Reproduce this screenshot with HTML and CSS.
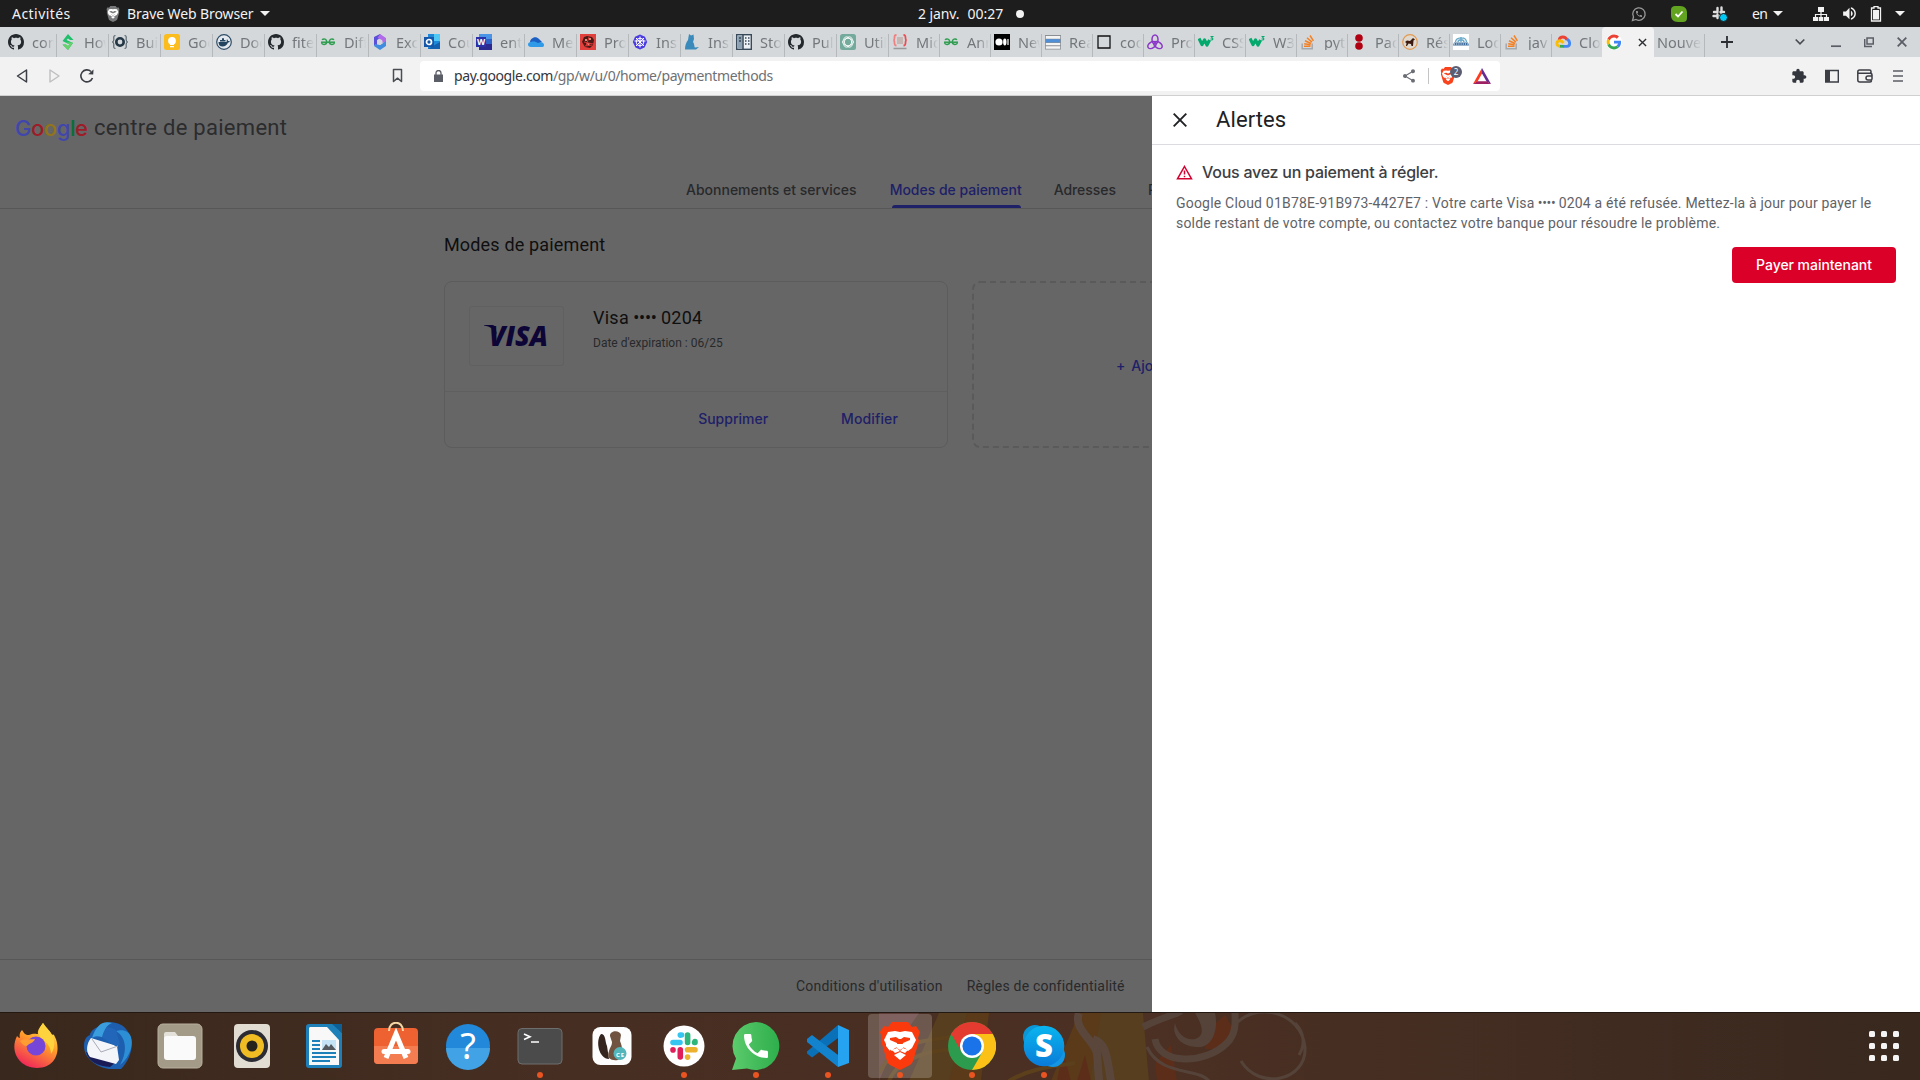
FILE: index.html
```
<!DOCTYPE html>
<html lang="fr">
<head>
<meta charset="utf-8">
<title>Modes de paiement</title>
<link rel="stylesheet" href="styles.css">
</head>
<body>
<svg class="defs" aria-hidden="true">
  <symbol id="github" viewBox="0 0 16 16"><path fill="#24292e" d="M8 0C3.58 0 0 3.58 0 8c0 3.54 2.29 6.53 5.47 7.59.4.07.55-.17.55-.38 0-.19-.01-.82-.01-1.49-2.01.37-2.53-.49-2.69-.94-.09-.23-.48-.94-.82-1.13-.28-.15-.68-.52-.01-.53.63-.01 1.08.58 1.23.82.72 1.21 1.87.87 2.33.66.07-.52.28-.87.51-1.07-1.78-.2-3.64-.89-3.64-3.95 0-.87.31-1.59.82-2.15-.08-.2-.36-1.02.08-2.12 0 0 .67-.21 2.2.82.64-.18 1.32-.27 2-.27.68 0 1.36.09 2 .27 1.53-1.04 2.2-.82 2.2-.82.44 1.1.16 1.92.08 2.12.51.56.82 1.27.82 2.15 0 3.07-1.87 3.75-3.65 3.95.29.25.54.73.54 1.48 0 1.07-.01 1.93-.01 2.2 0 .21.15.46.55.38A8.013 8.013 0 0016 8c0-4.42-3.58-8-8-8z"/></symbol>
  <symbol id="geeks" viewBox="0 0 16 16"><g fill="none" stroke="#2f9d50" stroke-width="1.500"><path d="M2 5.800c1.800-1.600 4.700-.8 4.700 2 0 3.400-4.600 3.400-5.200.8M14 5.800c-1.800-1.600-4.700-.8-4.700 2 0 3.400 4.600 3.400 5.200.8"/><path d="M1 8.200h14"/></g></symbol>
  <symbol id="w3" viewBox="0 0 16 16"><path fill="none" stroke="#04aa6d" stroke-width="3.200" stroke-linejoin="round" d="M1 4.500 4 10.500 6.500 6 9 11l2.600-5"/><path fill="none" stroke="#04aa6d" stroke-width="1.100" d="M12.500 2.500h2.300l-1.300 1.500c2 0 1.800 2.500-.9 1.900"/></symbol>
  <symbol id="stack" viewBox="0 0 16 16"><path fill="none" stroke="#a5a9ad" stroke-width="1.500" d="M2.200 9.500v5.300h10V9.500"/><path fill="none" stroke="#f48024" stroke-width="1.500" d="M4 12.300h6.500M4.200 9.700l6.400 1M5 6.700l6 2.800M7 3.800l4.900 4.300M10 1.500l3.400 5.300"/></symbol>
  <symbol id="lion" viewBox="0 0 40 48"><path d="M12 0h16l4 5 4-1 4 6-2 6 1 3-6 20c-1 3-3 4-5 5l-8 4-8-4c-2-1-4-2-5-5L1 19l1-3-2-6 4-6 4 1z" fill="currentColor"/><path fill="var(--face, #fff)" d="m20 10 5-1 7 1 4 8-4 8-4 3-3-3-3-1 1-4 7-3v-2l-6-1-3 2h-2l-3-2-6 1v2l7 3 1 4-3 1-3 3-4-3-4-8 4-8 7-1zM17 22h6v4l-3 2-3-2zM20 30l6 3-6 5-6-5z"/><path fill="var(--face, #fff)" d="m12 28 5-2 3 3 3-3 5 2-3 3-5-2-5 2zM6 20l5 5-1 4-4-5z"/></symbol>
  <symbol id="slack" viewBox="0 0 28 28"><g stroke-width="5.600" stroke-linecap="round" fill="none"><path stroke="#36c5f0" d="M3 10.500h7M10.300 3v.1M10.300 3h1.200"/><path stroke="#2eb67d" d="M17.600 3v7.500M25 9.500v1M25 10.500h-.5"/><path stroke="#ecb22e" d="M17.600 17.800H25M17.600 25v.1"/><path stroke="#e01e5a" d="M10.300 17.800V25M3 17.800v.1"/></g></symbol>
  <symbol id="phone" viewBox="0 0 24 24"><path fill="currentColor" d="M6.620 10.790c1.440 2.830 3.760 5.140 6.590 6.590l2.200-2.200c.27-.27.67-.36 1.020-.24 1.120.37 2.330.57 3.570.57.55 0 1 .45 1 1V20c0 .55-.45 1-1 1-9.390 0-17-7.610-17-17 0-.55.45-1 1-1h3.500c.55 0 1 .45 1 1 0 1.250.2 2.450.57 3.570.11.35.03.74-.25 1.020z"/></symbol>
</svg>

<header class="topbar">
  <span class="activities">Activités</span>
  <span class="appmenu"><svg class="lion" viewBox="0 0 40 48"><use href="#lion"/></svg><span>Brave Web Browser</span><i class="caret"></i></span>
  <span class="clock"><span>2 janv.</span><span>00:27</span><i class="dot"></i></span>
  <div class="tray">
    <svg width="16" height="16" viewBox="0 0 16 16" color="#999"><path fill="none" stroke="#999" stroke-width="1.300" d="m1.500 14.500 1-3.500a6.200 6.200 0 1 1 2.500 2.500z"/><use href="#phone" x="4" y="4" width="8" height="8"/></svg>
    <svg width="16" height="16" viewBox="0 0 16 16"><path fill="#62a420" d="M4 0h5c5 0 7 3 7 7v5c0 3-2 4-4 4H7c-5 0-7-3-7-7V4c0-3 2-4 4-4z"/><path fill="none" stroke="#fff" stroke-width="1.800" d="m4.500 8 2.500 2.500L11.500 5.500"/></svg>
    <svg width="16" height="16" viewBox="0 0 16 16"><path stroke="#ddd" stroke-width="2.400" stroke-linecap="round" stroke-dasharray="3.500 3" d="M5.500 2v12M9.500 1.500v8M2 6h12M1.500 10h10"/><circle cx="11.500" cy="11.500" r="4" fill="#00c8f5" stroke="#1d1d1d"/></svg>
    <span class="lang">en<i class="caret"></i></span>
    <svg width="16" height="16" viewBox="0 0 16 16"><path fill="#f2f2f2" d="M5 1h6v5H5zM0 11h5v4H0zm5.700 0h4.600v4H5.700zM11 11h5v4h-5z"/><path fill="none" stroke="#f2f2f2" stroke-width="1.200" d="M8 5v6M2.500 12V8.500h11V12"/></svg>
    <svg width="17" height="17" viewBox="0 0 24 24"><path fill="#f2f2f2" d="M3 9v6h4l5 5V4L7 9H3zm13.500 3c0-1.770-1.020-3.290-2.500-4.030v8.050c1.480-.73 2.500-2.250 2.500-4.020zM14 3.230v2.060c2.890.86 5 3.540 5 6.710s-2.110 5.850-5 6.710v2.060c4.010-.91 7-4.490 7-8.770s-2.990-7.860-7-8.770z"/></svg>
    <svg width="12" height="16" viewBox="0 0 12 16"><path fill="none" stroke="#f2f2f2" stroke-width="1.300" d="M4 2V.7h4V2h2.500v13h-9V2z"/><path fill="#f2f2f2" d="M3 4h6v9.500H3z"/></svg>
    <i class="caret"></i>
  </div>
</header>

<nav class="tabs">
  <div class="tab"><svg><use href="#github"/></svg><span>com</span></div>
  <div class="tab"><svg viewBox="0 0 16 16"><path fill="#1fbf6b" d="m8 0 5.500 6H10L8 4.500 6.500 6 13 9 8 16 2.500 10.500H6l2 1.500 1.500-1.500L2.500 7z"/><path fill="#6ad26c" d="M13 8.500 8 16l-5.500-5.500H6l2 1.500 1.700-1.500L6 8.600z"/></svg><span>How</span></div>
  <div class="tab"><svg viewBox="0 0 16 16"><circle cx="8" cy="8" r="3.700" fill="none" stroke="#233744" stroke-width="2.600"/><path fill="none" stroke="#5c6a72" stroke-width="1.200" d="M3.500 1.500C1 1.500 2 4 1.800 6 1.600 7.500.5 8 .5 8s1.100.5 1.300 2c.2 2-.8 4.500 1.700 4.500M12.500 1.500C15 1.500 14 4 14.200 6c.2 1.500 1.300 2 1.300 2s-1.100.5-1.300 2c-.2 2 .8 4.500-1.700 4.500"/></svg><span>Buil</span></div>
  <div class="tab"><svg viewBox="0 0 16 16"><rect width="16" height="16" rx="2.500" fill="#fbbc1e"/><circle cx="8" cy="6.800" r="3.900" fill="#fff"/><path fill="#fff" d="M6 9h4v2H6zM6 12h4v1.300H6z"/></svg><span>Goo</span></div>
  <div class="tab"><svg viewBox="0 0 16 16"><circle cx="8" cy="8" r="7.300" fill="#e3e9ee" stroke="#2f4d66" stroke-width="1.200"/><path fill="#24455f" d="M2.500 8h8c.5-1.500 0-2 .5-2.800.8.500 1 1.300 1 1.800h1.800c-.3 1-1 1.500-1.800 1.600C11 11.500 9 12.500 6.500 12.500 4 12.500 2.500 11 2.500 8zM4 6h5.500v1.500H4zM6 4.300h2V6H6z"/></svg><span>Doc</span></div>
  <div class="tab"><svg><use href="#github"/></svg><span>fitec</span></div>
  <div class="tab"><svg><use href="#geeks"/></svg><span>Diff</span></div>
  <div class="tab"><svg viewBox="0 0 16 16"><path fill="#5a4fd8" d="M8 0 2 3v8l3 2V6l5-3z"/><path fill="#b16be8" d="m8 0 6 4v4l-4 1V6L5.500 4z"/><path fill="#3f8be0" d="M14 7v5l-6 4-6-4 1-2 5 1 3-2z"/><path fill="#d4d8db" d="m8 5.500 2.500 1.200v2.800L8 11l-2.500-1.500V6.700z"/></svg><span>Exce</span></div>
  <div class="tab"><svg viewBox="0 0 16 16"><path fill="#1e88d8" d="M4 0h12v15H4z"/><path fill="#50c8f5" d="M10 0h6v7h-6z"/><path fill="#1360b0" d="M4 15 16 8v7z"/><rect y="3" width="10" height="10" fill="#1656a8"/><circle cx="5" cy="8" r="2.500" fill="none" stroke="#fff" stroke-width="1.700"/></svg><span>Cou</span></div>
  <div class="tab"><svg viewBox="0 0 16 16"><path fill="#4a94e8" d="M3 0h13v5H3z"/><path fill="#2f62c8" d="M3 5h13v5H3z"/><path fill="#2c2a90" d="M3 10h13v6H3z"/><rect y="3" width="10" height="10" fill="#2b2fa8"/><text x="1" y="11" font-size="8.500" font-weight="700" fill="#fff">W</text></svg><span>entr</span></div>
  <div class="tab"><svg viewBox="0 0 16 16"><path fill="#1b5fc4" d="M2 8c0-3 5-7 9-3l3 3-8 4z"/><path fill="#2f9be8" d="M3 13c-4 0-4-5 0-5 3-1 5 0 7 1 4-2 6 0 6 2s-1 2-3 2z"/></svg><span>Mes</span></div>
  <div class="tab"><svg viewBox="0 0 16 16"><path fill="#e2403c" d="M0 0h16v16H0z"/><path fill="#4a1a16" d="M4 3l3-1 5 1 2 3-1 5-3 3-5-1-3-5z"/><path fill="#e08a78" d="M5 5h2v2H5zM9 4h2v2H9zM6 9h4l-1 3z"/><path stroke="#d33" d="m4 8 9 2M9 3l-3 9M5 12l7-1"/></svg><span>Pro</span></div>
  <div class="tab"><svg viewBox="0 0 16 16"><path fill="#4a3be0" d="m8 .5 5 2.200L15.200 8 12.500 13.500 8 15.500 3.500 13.500.8 8 3 2.700z"/><circle cx="8" cy="8" r="3.800" fill="none" stroke="#fff"/><path stroke="#fff" d="M8 2.500v11M2.500 7h11M4 12l8-8M4 4l8 8"/></svg><span>Inst</span></div>
  <div class="tab"><svg viewBox="0 0 16 16"><path fill="#3a8bbb" d="M5 0l2 1.500L9.500.5 10 5 9 8c2 3 1 5 2 5.500l4-.5-3 2.500H1C1 11 2 9 4 6z"/></svg><span>Inst</span></div>
  <div class="tab"><svg viewBox="0 0 16 16"><rect x=".7" y=".7" width="14.600" height="14.600" fill="#eef2f5" stroke="#38495a" stroke-width="1.400"/><path fill="#8da3b3" d="M1.500 1.500h5v13h-5z"/><path stroke="#38495a" stroke-width="1.500" d="M7 1v14M3 4h2M3 7h2M9 4h1.500M12 4h1.500M9 7h1.500M12 7h1.500M9 10h1.500M12 10h1.500"/></svg><span>Stoc</span></div>
  <div class="tab"><svg><use href="#github"/></svg><span>Pull</span></div>
  <div class="tab"><svg viewBox="0 0 16 16"><rect width="16" height="16" rx="2.500" fill="#74aa9c"/><g fill="none" stroke="#fff" stroke-width=".8"><ellipse cx="8" cy="8" rx="5.600" ry="3.600"/><ellipse cx="8" cy="8" rx="5.600" ry="3.600" transform="rotate(60 8 8)"/><ellipse cx="8" cy="8" rx="5.600" ry="3.600" transform="rotate(120 8 8)"/></g></svg><span>Utili</span></div>
  <div class="tab narrow"><svg viewBox="0 0 16 16"><path fill="none" stroke="#f08080" stroke-width="1.800" d="M4.500 1c-2 0-2 1-2 3S1.500 6.200 1.500 6.200s1 .3 1 2.300 0 3 2 3"/><path fill="none" stroke="#ee4a50" stroke-width="1.800" d="M11.500 1c2 0 2 1 2 3s1 2.200 1 2.200-1 .3-1 2.300 0 3-2 3"/><path fill="#c5b8b4" d="M5 3h6v7H5z"/><path stroke="#999" stroke-width="1.500" d="M1.500 14.500h13"/></svg><span>Mig</span></div>
  <div class="tab narrow"><svg><use href="#geeks"/></svg><span>Ann</span></div>
  <div class="tab narrow"><svg viewBox="0 0 16 16"><path d="M0 0h16v16H0z"/><circle cx="5" cy="8" r="3.600" fill="#fff"/><ellipse cx="10.800" cy="8" rx="1.700" ry="3.400" fill="#fff"/><path stroke="#fff" stroke-width="1.200" d="M14 5v6"/></svg><span>New</span></div>
  <div class="tab narrow"><svg viewBox="0 0 16 16"><path fill="#8a8f94" d="M0 1h16v14.500H0z"/><path fill="#f4f4f4" d="M.8 2h14.400v2.700H.8zM.8 9h14.400v2.300H.8zM.8 12.300h14.400v2.400H.8z"/><path fill="#4f8fd8" d="M.8 5.200h14.400v3.200H.8z"/></svg><span>Rea</span></div>
  <div class="tab narrow"><svg viewBox="0 0 16 16"><path fill="none" stroke="#111" stroke-width="1.300" d="M2 2h12v12H2z"/></svg><span>cod</span></div>
  <div class="tab narrow"><svg viewBox="0 0 16 16"><g fill="none" stroke="#8b36c8" stroke-width="1.500"><ellipse cx="8" cy="5.500" rx="3" ry="4.600"/><ellipse cx="5" cy="11" rx="3" ry="4.600" transform="rotate(55 5 11)"/><ellipse cx="11" cy="11" rx="3" ry="4.600" transform="rotate(-55 11 11)"/></g></svg><span>Pro</span></div>
  <div class="tab narrow"><svg><use href="#w3"/></svg><span>CSS</span></div>
  <div class="tab narrow"><svg><use href="#w3"/></svg><span>W3S</span></div>
  <div class="tab narrow"><svg><use href="#stack"/></svg><span>pyth</span></div>
  <div class="tab narrow"><svg viewBox="0 0 16 16"><circle cx="8" cy="4" r="3.800" fill="#b00012"/><circle cx="8" cy="12" r="3.800" fill="#b00012"/></svg><span>Pag</span></div>
  <div class="tab narrow"><svg viewBox="0 0 16 16"><circle cx="8" cy="8" r="7.300" fill="#dfd9d0" stroke="#e39a50" stroke-width="1.200"/><path fill="#3d1a0d" d="m3 8 2-1.500 3 .5 3-3 2 1.500-1.500 1L11 12H9.500l-.5-2-2.500-.5L5 12H4l.5-3z"/></svg><span>Rés</span></div>
  <div class="tab narrow"><svg viewBox="0 0 16 16"><path fill="#fff" d="M0 0h16v16H0z"/><path fill="none" stroke="#69a9c9" stroke-width="1.400" d="M2.500 8C3 3 13 2 13.500 8M5 8c0-3 6-3 6 0M8 3v5"/><path fill="#3c6c9c" d="M1 8.500h14l1 3H0z"/><path stroke="#fff" stroke-dasharray="1 1.200" d="M1 10h14"/></svg><span>Log</span></div>
  <div class="tab narrow"><svg><use href="#stack"/></svg><span>jav</span></div>
  <div class="tab narrow"><svg viewBox="0 0 16 16"><g fill="none" stroke-width="2.800"><path stroke="#ea4335" d="M4 6c1-4 6.500-4 8 0"/><path stroke="#4285f4" d="M12 5c4 2.500 3 7.300 0 7.300H8"/><path stroke="#34a853" d="M8.500 12.300H4.500"/><path stroke="#fbbc05" d="M5 12.300c-4 0-4-5-1-5.500 2-.3 3.500.700 4.500 2"/></g></svg><span>Clou</span></div>
  <div class="tab active"><svg viewBox="-2 -2 52 52"><circle cx="24" cy="24" r="26" fill="#fff"/><path fill="#ea4335" d="M24 9.500c3.540 0 6.710 1.220 9.210 3.600l6.850-6.850C35.900 2.380 30.470 0 24 0 14.620 0 6.510 5.380 2.560 13.220l7.980 6.190C12.430 13.720 17.740 9.500 24 9.500z"/><path fill="#4285f4" d="M46.980 24.550c0-1.570-.15-3.090-.38-4.550H24v9.020h12.940c-.58 2.960-2.260 5.480-4.780 7.180l7.730 6c4.510-4.180 7.090-10.360 7.090-17.650z"/><path fill="#fbbc05" d="M10.530 28.590c-.48-1.450-.76-2.990-.76-4.590s.27-3.140.76-4.590l-7.980-6.190C.92 16.460 0 20.120 0 24c0 3.880.92 7.540 2.560 10.780z"/><path fill="#34a853" d="M24 48c6.480 0 11.930-2.130 15.890-5.810l-7.730-6c-2.150 1.450-4.920 2.300-8.160 2.300-6.260 0-11.570-4.220-13.470-9.910l-7.980 6.190C6.510 42.620 14.620 48 24 48z"/></svg><svg class="close" viewBox="0 0 10 10"><path stroke="#2b2e33" stroke-width="1.500" d="m1 1 8 8M9 1 1 9"/></svg></div>
  <div class="tab newtab"><span>Nouvel</span></div>
  <svg class="plus" viewBox="0 0 12 12"><path stroke="#2b2e33" stroke-width="1.800" d="M6 0v12M0 6h12"/></svg>
  <div class="winctl">
    <svg width="10" height="16" viewBox="0 0 10 16"><path fill="none" stroke="#4a4d52" stroke-width="1.700" d="m.7 5.500 4.300 4.300 4.300-4.300"/></svg>
    <svg width="10" height="16" viewBox="0 0 10 16"><path stroke="#5b5e66" stroke-width="1.700" d="M0 12.200h10"/></svg>
    <svg width="10" height="16" viewBox="0 0 10 16"><path fill="none" stroke="#5b5e66" stroke-width="1.500" d="M3 4h6.300v6H3zM.7 5v7.500H8"/></svg>
    <svg width="10" height="16" viewBox="0 0 10 16"><path stroke="#5b5e66" stroke-width="1.800" d="m.7 3.700 8.600 8.600m0-8.600-8.600 8.600"/></svg>
  </div>
</nav>

<div class="toolbar">
  <div class="navbtns">
    <svg width="16" height="16" viewBox="0 0 16 16"><path fill="none" stroke="#3b3e45" stroke-width="1.500" stroke-linejoin="round" d="M11.500 2v12L2.500 8z"/></svg>
    <svg width="16" height="16" viewBox="0 0 16 16"><path fill="none" stroke="#bfbfc2" stroke-width="1.400" stroke-linejoin="round" d="M2 2v12l9-6z"/></svg>
    <svg width="16" height="16" viewBox="0 0 16 16"><path fill="none" stroke="#3b3e45" stroke-width="1.600" d="M13.500 10A6 6 0 1 1 12 3.500"/><path fill="#3b3e45" d="m14.500 1.500-.3 5-5-.3z"/></svg>
  </div>
  <svg class="bookmark" viewBox="0 0 12 16"><path fill="none" stroke="#4a4d52" stroke-width="1.500" stroke-linejoin="round" d="M1.500 1.500h8v12l-4-3.300-4 3.300z"/></svg>
  <div class="url">
    <svg width="9" height="12" viewBox="0 0 9 12"><path fill="#5b5e66" d="M0 4.500h9V12H0z"/><path fill="none" stroke="#5b5e66" stroke-width="1.300" d="M2 5V3a2.500 2.500 0 0 1 5 0v2"/></svg>
    <span class="address"><b>pay.google.com</b>/gp/w/u/0/home/paymentmethods</span>
    <svg class="share" width="16" height="16" viewBox="0 0 24 24"><path fill="#6b6e75" d="M18 16.080c-.76 0-1.440.3-1.960.77L8.910 12.700c.05-.23.09-.46.09-.7s-.04-.47-.09-.7l7.050-4.110c.54.5 1.250.81 2.040.81 1.660 0 3-1.340 3-3s-1.340-3-3-3-3 1.340-3 3c0 .24.04.47.09.7L8.040 9.810C7.500 9.310 6.790 9 6 9c-1.660 0-3 1.340-3 3s1.340 3 3 3c.79 0 1.500-.31 2.040-.81l7.120 4.160c-.05.21-.08.43-.08.65 0 1.610 1.310 2.920 2.920 2.920s2.920-1.310 2.920-2.920-1.310-2.920-2.920-2.920z"/></svg>
    <i class="sep"></i>
    <span class="shield"><svg viewBox="0 0 40 48"><use href="#lion"/></svg><em>2</em></span>
    <svg class="bat" width="18" height="16" viewBox="0 0 18 16"><path fill="#ff3b1d" d="M9 0 0 16l4.500-2.500L9 5.500z"/><path fill="#662d91" d="m9 0 9 16-4.500-2.500L9 5.500z"/><path fill="#9e1f63" d="m0 16 4.500-2.700h9L18 16z"/></svg>
  </div>
  <div class="ext">
    <svg width="16" height="16" viewBox="0 0 24 24"><path fill="#33363c" d="M20.500 11H19V7c0-1.100-.9-2-2-2h-4V3.500C13 2.120 11.880 1 10.500 1S8 2.120 8 3.500V5H4c-1.100 0-1.990.9-1.990 2v3.800H3.500c1.490 0 2.700 1.210 2.700 2.700s-1.210 2.700-2.700 2.700H2V20c0 1.100.9 2 2 2h3.800v-1.500c0-1.490 1.210-2.700 2.700-2.700 1.490 0 2.700 1.210 2.700 2.700V22H17c1.100 0 2-.9 2-2v-4h1.500c1.380 0 2.500-1.120 2.500-2.500S21.880 11 20.500 11z"/></svg>
    <svg width="16" height="16" viewBox="0 0 16 16"><path fill="none" stroke="#3b3e45" stroke-width="1.400" d="M1.700 2.500h12.600v11.500H1.700z"/><path fill="#3b3e45" d="M1.500 2.500H6V14H1.500z"/></svg>
    <svg width="16" height="16" viewBox="0 0 16 16"><path fill="none" stroke="#3b3e45" stroke-width="1.500" d="M14 5.500V3.500q0-1.500-1.500-1.500H2.500Q.8 2 .8 4v8q0 2 2 2H13q1.500 0 1.500-1.500M1 5.300h12q2 0 2 1.700v4q0 1-1.500 1H11a2 2 0 0 1 0-4h4"/></svg>
    <svg width="12" height="16" viewBox="0 0 12 16"><path stroke="#5b5e66" stroke-width="1.600" d="M1 3h10M1 8h10M1 13h10"/></svg>
  </div>
</div>

<main class="view">
  <section class="page">
    <div class="brand"><span class="google"><i class="b">G</i><i class="r">o</i><i class="y">o</i><i class="b">g</i><i class="g">l</i><i class="r">e</i></span><span class="center">centre de paiement</span></div>
    <div class="pagenav"><a>Abonnements et services</a><a class="on">Modes de paiement</a><a class="addr">Adresses</a><a>Paramètres</a></div>
    <div class="body">
      <h1>Modes de paiement</h1>
      <div class="cards">
        <article class="card">
          <div class="info">
            <div class="logo"><svg width="66" height="24" viewBox="0 0 66 24"><path fill="#0c0536" d="M0 1h8c2 0 3 1 3.500 3l1.500 7C11 5.500 6 2.500 0 1.600z"/><text x="5" y="21.700" font-size="28" textLength="59" lengthAdjust="spacingAndGlyphs">VISA</text></svg></div>
            <div class="meta"><strong>Visa<span> •••• </span>0204</strong><small>Date d'expiration : 06/25</small></div>
          </div>
          <div class="acts"><a>Supprimer</a><a class="edit">Modifier</a></div>
        </article>
        <div class="add"><svg class="dash"><rect x="1" y="1" width="502" height="165" rx="7"/></svg><span>+</span><span>Ajouter un mode de paiement</span></div>
      </div>
    </div>
    <footer><a>Conditions d'utilisation</a><a>Règles de confidentialité</a></footer>
  </section>
  <aside class="drawer">
    <div class="dhead"><svg width="14" height="14" viewBox="0 0 14 14"><path stroke="#202124" stroke-width="1.900" d="m.7.7 12.600 12.600m0-12.600L.7 13.300"/></svg><h2>Alertes</h2></div>
    <div class="alert">
      <h3><svg width="17" height="15" viewBox="0 0 17 15"><path fill="none" stroke="#d50032" stroke-width="1.500" d="M8.500 1.500 15.500 13.800H1.500z"/><path stroke="#d50032" stroke-width="1.500" d="M8.500 5.500v4M8.500 10.700v1.500"/></svg>Vous avez un paiement à régler.</h3>
      <p>Google Cloud 01B78E-91B973-4427E7 : Votre carte Visa<span> •••• </span>0204 a été refusée. Mettez-la à jour pour payer le<br>solde restant de votre compte, ou contactez votre banque pour résoudre le problème.</p>
      <button>Payer maintenant</button>
    </div>
  </aside>
</main>

<div class="dock">
  <svg class="wallpaper" viewBox="0 0 500 68">
    <path fill="#5a3a18" d="M80 0h30l-8 68H60zM200 0h38l-4 30 8 38h-70z"/>
    <path fill="#563e1e" d="M60 0h28L70 68H30zM222 0h16l3 68h-30zM230 0h34l6 68h-36l2-40z"/>
    <path fill="#6a4042" opacity=".7" d="M0 0h40L12 40 0 68z"/>
    <path fill="#5c2e1a" d="M178 68l6-30 8 30zM198 68l8-26 6 26zM276 50l16-18 6 36h-20zM330 16l16-14 8 14-10 20h-18z"/>
    <path fill="none" stroke="#5c401c" stroke-width="4" d="M0 60C20 20 60 30 90 20M10 68c10-25 50-35 80-30M130 68c20-12 40-14 66-18"/>
    <path fill="none" stroke="#5b463c" stroke-width="8" d="M200 0c-6 16 14 26 18 40l2 28M214 26c14 4 14 20 18 42"/>
    <path fill="none" stroke="#55433a" stroke-width="7" d="M264 14C284 4 296 2 302-2M276 26c4 26 50 26 72 4 10-10 8-22 8-32"/>
    <path fill="#55433a" d="M316 0h20c4 18-4 36-18 34-14 0-26-10-22-24 2 10 10 18 20 16 8-2 10-10 0-26z"/>
    <path fill="none" stroke="#55433a" stroke-width="3" d="M268 34c14 30 50 20 62 34M356 12c20-24 66-14 70 22 2 34-46 44-64 14M416 10c10 10 10 22 4 32"/>
  </svg>
  <div class="app"><svg viewBox="0 0 48 48"><defs><linearGradient id="ff" x1=".8" y1="0" x2=".3" y2="1"><stop offset="0" stop-color="#fff04a"/><stop offset=".45" stop-color="#ff9a2a"/><stop offset="1" stop-color="#f0235c"/></linearGradient></defs><path fill="url(#ff)" d="M9 8c2 3 3 5 7 5 4-2 8-1 9-1-1-4 3-8 5-11 3 5 6 7 9 12 2-1 2 0 3 2 6 12 2 31-18 31C7 46-4 30 4 14c1 1 2 2 3 2-1-3 0-6 2-8z" transform="translate(1 0)"/><path fill="#ffd33d" d="M31 1c3 5 8 8 10 14 3 8 0 14-2 17 0-9-6-12-11-17-3-4 0-10 3-14z"/><circle cx="24" cy="24" r="9.500" fill="#7546d8"/><path fill="#ff9c32" d="M8 19c4-3 9-1 15-2-1 4-6 4-8 7-3 0-5-2-7-5z"/></svg></div>
  <div class="app"><svg viewBox="0 0 48 48"><path fill="#1d5fae" d="M14 5C20-2 36-1 42 7c10 11 6 29-5 40H25C12 45 0 36 0 24c0-7 3-10 6-11 0-3 4-7 8-8z"/><path fill="#2c8fd6" d="M32 9c10 6 12 20 4 34 8-6 14-18 11-28-2-6-8-8-15-6z"/><path fill="#1a1c58" d="M2 30c3 10 12 14 24 15l6-5-22-8z"/><path fill="#f4f5f8" d="m7 16 26 8 2 14-3 4L6 35c-5-6-3-14 1-19z"/><path fill="#2166b8" d="M7 16C12 6 22 2 32 8l4 14-3 3-16-10z"/><path fill="none" stroke="#a8acb8" d="m8 17 9 13 17-6"/><path fill="#3a9ede" d="M8 16C12 4 18-2 28 1c-6 2-8 8-10 14-4-1-7-1-10 1z"/></svg></div>
  <div class="app"><svg viewBox="0 0 48 48"><rect x="2" y="2" width="44" height="44" rx="5" fill="#a39b88" stroke="#b8b09e" stroke-width="1"/><path fill="#e4e1da" d="M8 12q0-2 2-2h9l3 4h15v10H8z"/><rect x="8" y="14" width="32" height="24" rx="3" fill="#fafafa"/></svg></div>
  <div class="app"><svg viewBox="0 0 48 48"><rect x="6" y="2" width="36" height="44" rx="4" fill="#e2ddd3"/><circle cx="24" cy="24" r="16" fill="#2b2c33"/><circle cx="24" cy="24" r="12" fill="#f0bc24"/><circle cx="24" cy="24" r="5.500" fill="#26231c"/></svg></div>
  <div class="app"><svg viewBox="0 0 48 48"><path fill="#1e80b8" d="M9 2h25l8 9v32q0 3-3 3H9q-3 0-3-3V5q0-3 3-3z"/><path fill="#f8f8f8" d="M10 5h17l12 13v25H9V6z"/><path fill="#0d6096" d="M32 2h10v9z"/><path stroke="#1e80b8" stroke-width="2" d="M12 19h8M12 23h8M12 27h8M12 31h24M12 35h24M12 39h18"/><path fill="#c4e4f6" d="M22 18h14v10H22z"/><path fill="#555a5e" d="m22 28 4-6 3 3 2-3 5 6z"/></svg></div>
  <div class="app"><svg viewBox="0 0 48 48"><rect x="2" y="6" width="44" height="36" rx="4" fill="#ee6130"/><path fill="#f37c50" d="M2 24h44v14q0 4-4 4H6q-4 0-4-4z"/><path fill="none" stroke="#f5d6a4" stroke-width="2" d="M17 9c0-11 14-11 14 0"/><path fill="none" stroke="#fff" stroke-width="5" d="m14 36 10-24 10 24"/><path stroke="#fff" stroke-width="5" stroke-linecap="round" d="M12 29.500h24"/></svg></div>
  <div class="app"><svg viewBox="0 0 48 48"><circle cx="24" cy="24" r="22" fill="#2288da"/><path fill="#41a3e6" d="M2 26a22 22 0 0 0 44 0z"/><text class="help" x="24" y="37" text-anchor="middle">?</text></svg></div>
  <div class="app run"><svg viewBox="0 0 48 48"><rect x="2" y="6.500" width="44" height="35.500" rx="4" fill="#4b4b4b" stroke="#6e6e6e"/><path fill="none" stroke="#fff" stroke-width="1.600" d="m8 12 6 2.800L8 17.500M15 20h8"/></svg></div>
  <div class="app"><svg viewBox="0 0 48 48"><rect x="4.500" y="5" width="39" height="38" rx="8" fill="#fdfdfd"/><path fill="#35251f" d="M13 12c5 0 4 8 6 12l2 13c-10 0-14-18-8-25z"/><path fill="#705441" d="M22 14c0-6 10-6 11-1l-1 6c3 6 3 16-2 19-6 1-12-1-9-9 1-4 3-5 3-9z"/><circle cx="32" cy="31.500" r="6.500" fill="#53b6ba"/><text class="ce" x="28" y="34.500" textLength="8">CE</text></svg></div>
  <div class="app run"><svg viewBox="0 0 48 48"><circle cx="24" cy="24" r="20.500" fill="#fff"/><use href="#slack" x="10" y="10" width="28" height="28"/></svg></div>
  <div class="app run"><svg viewBox="0 0 48 48" color="#fff"><defs><linearGradient id="wa"><stop offset="0" stop-color="#5ccb6c"/><stop offset="1" stop-color="#2eae4c"/></linearGradient></defs><path fill="url(#wa)" d="M24 0a24 24 0 1 1-9 46.500L0 48l4-11.500A24 24 0 0 1 24 0z"/><use href="#phone" x="8" y="8" width="32" height="32"/></svg></div>
  <div class="app run"><svg viewBox="0 0 48 48"><path fill="#0a70b8" d="M34 3v13L8 35.500l-5-4v-2z"/><path fill="#1383ce" d="m3 17 5-4 26 20v12L3 20z"/><path fill="#25a2f0" d="m34 3 11 5v33l-11 4z"/></svg></div>
  <div class="app run focus"><svg class="brave" viewBox="0 0 40 48"><use href="#lion"/></svg></div>
  <div class="app run"><svg viewBox="0 0 48 48"><circle cx="24" cy="24" r="24" fill="#2d9b4e"/><path fill="#fbc116" d="M24 12h20.800A24 24 0 0 1 24 48l10.400-18z"/><path fill="#e33b30" d="M3.200 12a24 24 0 0 1 41.600 0H24L13.600 30z"/><circle cx="24" cy="24" r="12" fill="#fff"/><circle cx="24" cy="24" r="9.600" fill="#1a73e8"/></svg></div>
  <div class="app run"><svg viewBox="0 0 48 48"><defs><linearGradient id="sk" x2="0" y2="1"><stop offset="0" stop-color="#09b5ef"/><stop offset="1" stop-color="#0a7bd8"/></linearGradient></defs><circle cx="15" cy="15" r="12" fill="#0b96d6"/><circle cx="33" cy="33" r="12" fill="#1496e4"/><circle cx="24" cy="24" r="20.300" fill="url(#sk)"/><text class="skype" x="24" y="35" text-anchor="middle">S</text></svg></div>
  <div class="grid"><i></i><i></i><i></i><i></i><i></i><i></i><i></i><i></i><i></i></div>
</div>
</body>
</html>
```
FILE: styles.css
```
* { box-sizing: border-box; }
body {
  margin: 0;
  width: 1920px;
  height: 1080px;
  overflow: hidden;
  display: flex;
  flex-direction: column;
  font-family: "Noto Sans", sans-serif;
}
i, em { font-style: normal; }
svg { display: block; flex: none; }
.defs { position: absolute; width: 0; height: 0; }

/* Desktop top bar */
.topbar {
  height: 27px;
  flex: none;
  display: flex;
  align-items: center;
  background: #1d1d1d;
  color: #f2f2f2;
  font-size: 14px;
}
.activities { width: 94px; padding-left: 12px; letter-spacing: .45px; }
.appmenu { width: 824px; display: flex; align-items: center; padding-left: 12px; letter-spacing: -.1px; }
.lion { width: 14px; height: 16px; margin-right: 7px; color: #77797b; }
.caret {
  border: 5px solid transparent;
  border-top-color: currentColor;
  border-bottom: 0;
  margin-left: 7px;
}
.clock { display: flex; align-items: center; letter-spacing: -.1px; }
.clock span + span { margin-left: 8px; letter-spacing: 0; }
.dot { width: 8px; height: 8px; border-radius: 50%; background: #f2f2f2; margin-left: 13px; }
.tray { margin-left: auto; display: flex; align-items: center; padding-right: 15px; }
.tray svg:nth-child(1) { margin-right: 24px; }
.tray svg:nth-child(2) { margin-right: 25px; }
.tray svg:nth-child(3) { margin-right: 24px; }
.lang { display: flex; align-items: center; width: 61px; letter-spacing: -.6px; }
.lang .caret { margin-left: 6px; }
.tray svg:nth-child(5) { margin-right: 12px; }
.tray svg:nth-child(6) { margin-right: 12px; }
.tray svg:nth-child(7) { margin-right: 6px; }

/* Tab strip */
.tabs {
  height: 30px;
  flex: none;
  display: flex;
  align-items: flex-end;
  padding-left: 4px;
  background: #d4d8db;
  color: #73777b;
  font-size: 14.5px;
}
.tab {
  width: 52px;
  height: 23px;
  flex: none;
  display: flex;
  align-items: center;
  padding: 0 0 7px 3px;
  border-left: 1px solid #b5b9bc;
  overflow: hidden;
}
.tab:first-child { border-color: transparent; }
.narrow { width: 51px; }
.tab > svg { width: 16px; height: 16px; }
.tab span {
  width: 22px;
  margin-left: 8px;
  line-height: 16px;
  overflow: hidden;
  white-space: nowrap;
  -webkit-mask-image: linear-gradient(90deg, #000 50%, transparent);
  mask-image: linear-gradient(90deg, #000 50%, transparent);
}
.active { height: 30px; background: #f2f2f2; border: 0; border-radius: 4px 4px 0 0; padding-left: 4px; padding-bottom: 0; }
.tab > .close { width: 9px; height: 9px; margin-left: 16px; }
.newtab { width: 51px; border-left: 0; border-right: 1px solid #b5b9bc; }
.newtab span {
  width: 45px;
  margin-left: 0;
  -webkit-mask-image: linear-gradient(90deg, #000 55%, transparent);
  mask-image: linear-gradient(90deg, #000 55%, transparent);
}
.tab text { font-family: "Noto Sans", sans-serif; }
.plus { width: 12px; height: 12px; margin: 0 0 9px 16px; }
.winctl { margin: 0 13px 7px auto; display: flex; gap: 23px; }
.winctl svg:first-child { margin-right: 3px; }

/* Address bar */
.toolbar {
  height: 39px;
  flex: none;
  display: flex;
  align-items: center;
  background: #f2f2f2;
  border-bottom: 1px solid #d0d0d0;
}
.navbtns { width: 392px; padding-left: 15px; display: flex; gap: 18px; }
.navbtns svg + svg { margin-left: -1px; }
.navbtns svg + svg + svg { margin-left: -3px; }
.bookmark { width: 12px; height: 16px; }
.url {
  width: 1080px;
  height: 30px;
  margin-left: 16px;
  display: flex;
  align-items: center;
  padding: 0 9px 0 14px;
  border-radius: 4px;
  background: #fff;
  font-size: 14px;
}
.address { margin-left: 11px; color: #6e7074; letter-spacing: -.39px; line-height: 20px; }
.address b { font-weight: 400; color: #33363b; }
.share { margin-left: auto; }
.sep { width: 1px; height: 16px; background: #c4c4c4; margin: 0 11px; }
.shield { display: flex; width: 33px; color: #f8431c; position: relative; }
.shield svg { width: 16px; height: 18px; }
.shield em {
  position: absolute;
  left: 10px;
  top: -1px;
  width: 12px;
  height: 12px;
  border-radius: 6px;
  background: #5b5d72;
  color: #fff;
  font-size: 8px;
  line-height: 12px;
  text-align: center;
}
.ext { margin-left: auto; padding-right: 16px; display: flex; gap: 17px; }
.ext svg:nth-child(-n+2) { margin-left: -2px; margin-right: 2px; }
.ext svg:nth-child(3) { margin-left: -2px; margin-right: 2px; }

/* Page */
.view { height: 916px; flex: none; display: flex; }
.page {
  width: 1152px;
  display: flex;
  flex-direction: column;
  overflow: hidden;
  background: #666;
  color: #0f0f10;
  white-space: nowrap;
}
.brand { height: 76px; padding: 18px 0 0 15px; display: flex; font: 22px/28px Roboto, sans-serif; color: #2b2c2e; }
.google { width: 79px; font: 500 22px/28px Inter, sans-serif; letter-spacing: -.45px; }
.b { color: #4046ac; }
.r { color: #9c1c28; }
.y { color: #92741a; }
.g { color: #0a6e38; }
.center { letter-spacing: .29px; }
.pagenav {
  height: 37px;
  flex: none;
  display: flex;
  align-items: stretch;
  gap: 33px;
  padding-left: 686px;
  border-bottom: 1px solid #575757;
  font: 500 14px/36px Inter, sans-serif;
  color: #28292b;
}
.addr { margin: 0 -1px; letter-spacing: -.05px; }
.on { position: relative; color: #1e2068; letter-spacing: -.02px; }
.on::after {
  content: "";
  position: absolute;
  left: 2px;
  right: 1px;
  bottom: 0;
  height: 3px;
  border-radius: 3px 3px 0 0;
  background: #1e2068;
}
.body { flex: 1; padding: 22px 0 0 444px; }
h1 { margin: 0; font: 18px/28px Roboto, sans-serif; letter-spacing: .16px; }
.cards { margin-top: 22px; display: flex; gap: 24px; }
.card { width: 504px; height: 167px; flex: none; border: 1px solid #5c5c5c; border-radius: 8px; }
.info { height: 110px; display: flex; padding: 24px; border-bottom: 1px solid #5f5f5f; }
.logo { width: 95px; height: 60px; display: flex; align-items: center; justify-content: center; border: 1px solid #606060; border-radius: 3px; }
.logo text { font-family: "Open Sans", sans-serif; font-weight: 800; font-style: italic; fill: #0c0536; }
.meta { margin-left: 29px; display: flex; flex-direction: column; }
.meta strong { font: 18px/24px Roboto, sans-serif; letter-spacing: .25px; }
.meta strong span { letter-spacing: -.2px; }
.meta small { margin-top: 5px; font: 12px/16px Roboto, sans-serif; color: #28292b; }
.acts { display: flex; height: 54px; align-items: center; justify-content: flex-end; gap: 73px; padding-right: 49px; font: 500 14px/20px Inter, sans-serif; color: #1e2068; }
.edit { letter-spacing: .12px; }
.add { width: 504px; height: 167px; flex: none; display: flex; align-items: center; position: relative; padding: 3px 0 0 144px; gap: 6px; font: 500 14px/20px Inter, sans-serif; color: #1e2068; }
.dash { position: absolute; left: 0; top: 0; width: 504px; height: 167px; fill: none; stroke: #5a5a5a; stroke-width: 2; stroke-dasharray: 6 4; }
.page footer { height: 53px; flex: none; display: flex; gap: 24px; padding-left: 796px; border-top: 1px solid #575757; font: 14px/53px Roboto, sans-serif; letter-spacing: .2px; color: #28292b; }

/* Alert panel */
.drawer { flex: 1; background: #fff; font-family: Roboto, sans-serif; }
.dhead { height: 49px; display: flex; align-items: center; padding-left: 21px; border-bottom: 1px solid #dadce0; }
h2 { margin: 0 0 0 29px; font: 22px/28px Roboto, sans-serif; letter-spacing: .1px; color: #202124; }
.alert { padding: 15px 24px; display: flex; flex-direction: column; }
h3 { margin: 0; display: flex; align-items: center; gap: 9px; font: 500 16px/24px Inter, sans-serif; letter-spacing: -.24px; color: #3c4043; }
h3 svg { margin-top: 1px; }
.alert p { margin: 9px 0 0; font-size: 14px; line-height: 20px; letter-spacing: .2px; color: #5f6368; white-space: nowrap; }
.alert p span { letter-spacing: -.3px; }
.alert button {
  align-self: flex-end;
  margin-top: 14px;
  width: 164px;
  height: 36px;
  border: 0;
  border-radius: 4px;
  background: #db0028;
  color: #fff;
  font: 500 14px/20px Inter, sans-serif;
  letter-spacing: -.05px;
}

/* Dock */
.dock {
  height: 68px;
  flex: none;
  display: flex;
  position: relative;
  border-top: 1px solid #241812;
  background: linear-gradient(90deg, #39281d, #472e22 30%, #4b3023 60%, #422c21 80%, #38281e);
}
.wallpaper { position: absolute; left: 879px; top: 0; width: 500px; height: 68px; }
.app { width: 72px; position: relative; display: flex; justify-content: center; padding-top: 9px; }
.app > svg { width: 48px; height: 48px; position: relative; }
.app > .brave { width: 40px; color: #fa3a0c; }
.focus::before { content: ""; position: absolute; left: 4px; top: 1px; width: 64px; height: 64px; border-radius: 4px; background: rgba(255, 255, 255, .2); }
.run::after { content: ""; position: absolute; left: 33px; top: 59px; width: 6px; height: 6px; border-radius: 50%; background: #e95420; }
.help { font: 36px "Noto Sans", sans-serif; fill: #fff; }
.ce { font: 700 6px "Noto Sans", sans-serif; fill: #fff; }
.skype { font: 800 31px "Open Sans", sans-serif; fill: #fff; }
.grid { margin: 18px 21px 0 auto; width: 30px; height: 30px; display: grid; grid-template-columns: repeat(3, 6px); grid-auto-rows: 6px; gap: 6px; }
.grid i { background: #f4f4f4; border-radius: 1.5px; }
```
